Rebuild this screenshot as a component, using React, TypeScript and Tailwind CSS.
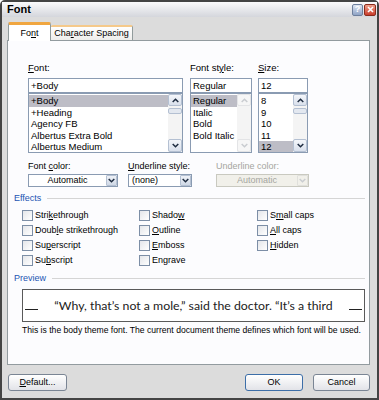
import React from "react";

const F = "font-['Liberation_Sans',Arial,sans-serif]";

function U({ children }: { children: React.ReactNode }) {
  return <span className="underline underline-offset-[1px] decoration-[1px]">{children}</span>;
}

function Chevron({ down, disabled }: { down?: boolean; disabled?: boolean }) {
  return (
    <svg width="7" height="5" viewBox="0 0 7 5">
      <path
        d={down ? "M0.7 1 L3.5 3.8 L6.3 1" : "M0.7 4 L3.5 1.2 L6.3 4"}
        fill="none"
        stroke={disabled ? "#c9ccd0" : "#1e2c40"}
        strokeWidth="1.5"
      />
    </svg>
  );
}

function ScrollBar({ disabled }: { disabled?: boolean }) {
  const btn = disabled
    ? "border border-[#e3e4e6] bg-[#f6f6f6]"
    : "border border-[#b4c0d2] bg-linear-to-b from-[#f4f6fa] to-[#d9e0ec]";
  return (
    <div className="w-[14px] h-full flex flex-col bg-[#f4f4f4]">
      <div className={`h-[12px] flex items-center justify-center rounded-[2px] ${btn}`}>
        <Chevron disabled={disabled} />
      </div>
      {!disabled && (
        <div className="h-[6px] mt-[2px] rounded-[2px] border border-[#b4c0d2] bg-[#e3e8f0]" />
      )}
      <div className="flex-1" />
      <div className={`h-[13px] flex items-center justify-center rounded-[2px] ${btn}`}>
        <Chevron down disabled={disabled} />
      </div>
    </div>
  );
}

function ListBox({
  items,
  selected,
  disabledScroll,
}: {
  items: string[];
  selected: number;
  disabledScroll?: boolean;
}) {
  return (
    <div className="h-[60px] border border-[#8a9bb2] bg-white flex">
      <div className="flex-1 flex flex-col pt-[1px] overflow-hidden">
        {items.map((t, i) => (
          <div
            key={i}
            className={`h-[11.5px] leading-[11.5px] pl-[2px] text-[9.5px] whitespace-nowrap ${
              i === selected ? "bg-[#bdbdc6]" : ""
            }`}
          >
            {t}
          </div>
        ))}
      </div>
      <ScrollBar disabled={disabledScroll} />
    </div>
  );
}

function Input({ text }: { text: string }) {
  return (
    <div className="h-[15px] border border-[#8a9bb2] bg-white pl-[2px] text-[9.5px] leading-[13px]">
      {text}
    </div>
  );
}

function Select({
  w,
  text,
  disabled,
  center,
}: {
  w: string;
  text: string;
  disabled?: boolean;
  center?: boolean;
}) {
  return (
    <div
      className={`${w} h-[13px] flex border ${
        disabled ? "border-[#c9c9c0] bg-[#f1f0ea] text-[#a5a5a0]" : "border-[#8a9bb2] bg-white text-black"
      }`}
    >
      <div className={`flex-1 text-[9px] leading-[11px] ${center ? "text-center" : "pl-[3px]"}`}>{text}</div>
      <div
        className={`w-[11px] h-full flex items-center justify-center rounded-[1px] border ${
          disabled ? "border-[#e0e0dc] bg-[#f1f0ea]" : "border-[#b4c0d2] bg-linear-to-b from-[#eef1f7] to-[#cfd8e6]"
        }`}
      >
        <Chevron down disabled={disabled} />
      </div>
    </div>
  );
}

function Check({ label }: { label: React.ReactNode }) {
  return (
    <div className="h-[15px] flex items-start gap-[2px]">
      <div className="w-[11px] h-[11px] border border-[#7c8ea6] bg-linear-to-br from-[#e4e6ea] to-white" />
      <div className="text-[9px] leading-[11px]">{label}</div>
    </div>
  );
}

function Section({ title, top }: { title: string; top?: string }) {
  return (
    <div className={`${top} h-[11px] flex items-center pl-[6px] pr-[4px] gap-[6px]`}>
      <span className="text-[9px] leading-[11px] text-[#1d55b3]">{title}</span>
      <div className="flex-1 h-px bg-[#d5d5d5]" />
    </div>
  );
}

function Button({ w, children, def }: { w: string; children: React.ReactNode; def?: boolean }) {
  return (
    <div
      className={`${w} h-[17px] rounded-[3px] border ${
        def ? "border-[#3c6ea8]" : "border-[#7a8594]"
      } bg-linear-to-b from-[#ffffff] to-[#e2e3e8] flex items-center justify-center text-[9px] leading-[11px]`}
    >
      {children}
    </div>
  );
}

export default function App() {
  return (
    <div className={`${F} w-[379px] h-[400px] overflow-hidden text-black`}>
      <div className="w-full h-full border-[2px] border-[#444] rounded-t-[5px] bg-[#dcdcdc] flex flex-col">
        {/* Title bar */}
        <div className="h-[15px] bg-linear-to-b from-[#fbfbfc] to-[#d4d6dc] flex items-center pl-[5px] pr-[1px]">
          <span className="text-[11px] font-bold leading-[13px]">Font</span>
          <div className="flex-1" />
          <div className="w-[11px] h-[12px] rounded-[2px] border border-[#6d7f9c] bg-linear-to-b from-[#dfe6f2] to-[#8fa3c5] flex items-center justify-center text-[9px] font-bold text-white leading-none">
            ?
          </div>
          <div className="w-[12px] h-[12px] ml-[1px] rounded-[2px] border border-[#8a2b1c] bg-linear-to-b from-[#f0a08c] to-[#c7392a] flex items-center justify-center">
            <svg width="7" height="7" viewBox="0 0 7 7">
              <path d="M1 1 L6 6 M6 1 L1 6" stroke="white" strokeWidth="1.6" />
            </svg>
          </div>
        </div>

        {/* Tabs */}
        <div className="pt-[5px] ml-[6px] flex items-end h-[23px] relative z-10">
          <div className="w-[43px] h-[19px] -mb-[1px] bg-white border-x border-[#919b9c] border-t-[3px] border-t-[#f0a640] rounded-t-[2px] flex items-start justify-center pt-[3px] text-[9px] leading-[11px]">
            <span>
              Fo<U>n</U>t
            </span>
          </div>
          <div className="w-[82px] h-[15px] bg-linear-to-b from-white to-[#eeedeb] border-r border-[#919b9c] border-t-[2px] border-t-[#f5c98a] rounded-t-[2px] flex items-start justify-center pt-[1px] text-[9px] leading-[11px]">
            <span>
              Cha<U>r</U>acter Spacing
            </span>
          </div>
        </div>

        {/* Panel */}
        <div className="ml-[5px] w-[363px] h-[325px] bg-[#fcfcfe] border border-[#929b9f] flex flex-col">
          {/* Font / style / size */}
          <div className="pt-[21px] pl-[20px] flex">
            <div className="w-[155px] flex flex-col">
              <div className="h-[16px] text-[9.5px] leading-[11px]">
                <U>F</U>ont:
              </div>
              <Input text="+Body" />
              <ListBox
                items={["+Body", "+Heading", "Agency FB", "Albertus Extra Bold", "Albertus Medium"]}
                selected={0}
              />
            </div>
            <div className="w-[62px] ml-[7px] flex flex-col">
              <div className="h-[16px] text-[9.5px] leading-[11px]">
                Font st<U>y</U>le:
              </div>
              <Input text="Regular" />
              <ListBox items={["Regular", "Italic", "Bold", "Bold Italic"]} selected={0} disabledScroll />
            </div>
            <div className="w-[50px] ml-[6px] flex flex-col">
              <div className="h-[16px] text-[9.5px] leading-[11px]">
                <U>S</U>ize:
              </div>
              <Input text="12" />
              <ListBox items={["8", "9", "10", "11", "12"]} selected={4} />
            </div>
          </div>

          {/* Color / underline */}
          <div className="mt-[8px] pl-[20px] flex">
            <div className="w-[90px]">
              <div className="h-[13px] text-[9px] leading-[11px]">
                Font <U>c</U>olor:
              </div>
              <Select w="w-[90px]" text="Automatic" center />
            </div>
            <div className="w-[64px] ml-[10px]">
              <div className="h-[13px] text-[9px] leading-[11px] whitespace-nowrap">
                <U>U</U>nderline style:
              </div>
              <Select w="w-[64px]" text="(none)" />
            </div>
            <div className="w-[93px] ml-[24px]">
              <div className="h-[13px] text-[9px] leading-[11px] text-[#a5a5a0] whitespace-nowrap">
                Underline color:
              </div>
              <Select w="w-[93px]" text="Automatic" center disabled />
            </div>
          </div>

          <Section title="Effects" top="mt-[6px]" />

          <div className="mt-[6px] pl-[14px] flex">
            <div className="w-[117px] flex flex-col">
              <Check label={<>Stri<U>k</U>ethrough</>} />
              <Check label={<>Doub<U>l</U>e strikethrough</>} />
              <Check label={<>Su<U>p</U>erscript</>} />
              <Check label={<>Su<U>b</U>script</>} />
            </div>
            <div className="w-[118px] flex flex-col">
              <Check label={<>Shado<U>w</U></>} />
              <Check label={<><U>O</U>utline</>} />
              <Check label={<><U>E</U>mboss</>} />
              <Check label={<>En<U>g</U>rave</>} />
            </div>
            <div className="flex flex-col">
              <Check label={<>S<U>m</U>all caps</>} />
              <Check label={<><U>A</U>ll caps</>} />
              <Check label={<><U>H</U>idden</>} />
            </div>
          </div>

          <Section title="Preview" top="mt-[3px]" />

          <div className="mt-[5px] ml-[14px] w-[343px] h-[33px] border border-[#5a5a5a] bg-white flex items-center px-[2px]">
            <div className="w-[13px] h-px bg-[#222] mt-[8px]" />
            <div className="flex-1 text-center font-['Lato',sans-serif] text-[12.3px] text-[#222] leading-[14px] whitespace-nowrap">
              “Why, that’s not a mole,” said the doctor. “It’s a third
            </div>
            <div className="w-[13px] h-px bg-[#222] mt-[8px]" />
          </div>

          <div className="mt-[3px] ml-[14px] text-[8.6px] leading-[11px] whitespace-nowrap">
            This is the body theme font. The current document theme defines which font will be used.
          </div>
        </div>

        {/* Buttons */}
        <div className="mt-[9px] ml-[6px] mr-[7px] flex">
          <Button w="w-[59px]">
            <span>
              <U>D</U>efault...
            </span>
          </Button>
          <div className="flex-1" />
          <Button w="w-[58px]" def>
            OK
          </Button>
          <div className="w-[10px]" />
          <Button w="w-[57px]">Cancel</Button>
        </div>
      </div>
    </div>
  );
}
